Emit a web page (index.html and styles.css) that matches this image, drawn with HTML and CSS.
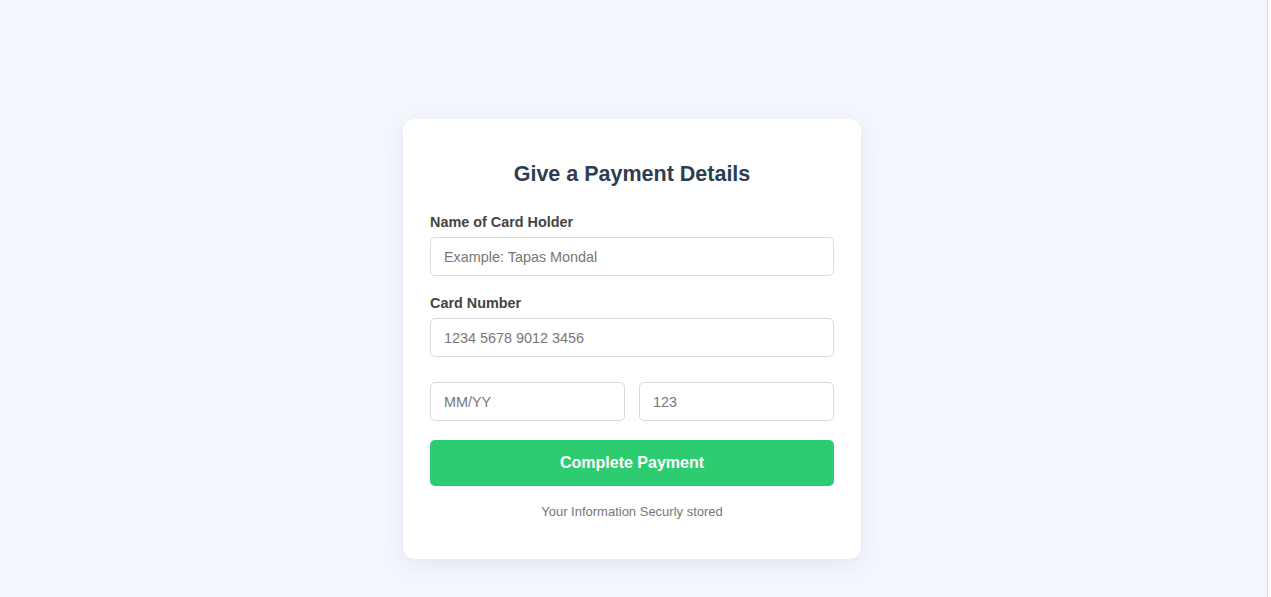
FILE: index.html
```html
<!DOCTYPE html>
<html lang="en">
<head>
<meta charset="utf-8">
<title>Payment</title>
<link rel="stylesheet" href="styles.css">
</head>
<body>
<div class="page">
  <form class="card">
    <h2 class="title">Give a Payment Details</h2>
    <div class="field">
      <label class="label">Name of Card Holder</label>
      <input class="input" type="text" placeholder="Example: Tapas Mondal">
    </div>
    <div class="field">
      <label class="label">Card Number</label>
      <input class="input" type="text" placeholder="1234 5678 9012 3456">
    </div>
    <div class="row">
      <input class="input" type="text" placeholder="MM/YY">
      <input class="input" type="text" placeholder="123">
    </div>
    <button class="btn" type="button">Complete Payment</button>
    <p class="note">Your Information Securly stored</p>
  </form>
</div>
</body>
</html>
```
FILE: styles.css
```css
html, body {
  margin: 0;
  padding: 0;
  background: #ffffff;
}
body {
  font-family: "Liberation Sans", Arial, sans-serif;
}
.page {
  width: 1268px;
  height: 597px;
  box-sizing: border-box;
  background: #f3f6fd;
  border-right: 1px solid #dfe1e6;
  padding-top: 119px;
  display: flex;
  justify-content: center;
  align-items: flex-start;
  overflow: hidden;
}
.card {
  width: 458px;
  box-sizing: border-box;
  background: #fff;
  border-radius: 12px;
  padding: 42px 27px 40px;
  box-shadow: 0 6px 20px rgba(40, 50, 90, 0.08);
  margin-left: -3px;
}
.title {
  margin: 0 0 27px;
  font-size: 21.5px;
  line-height: 26px;
  font-weight: bold;
  text-align: center;
  color: #2c3e50;
}
.field {
  margin-bottom: 19px;
}
.label {
  display: block;
  font-size: 14.4px;
  line-height: 16px;
  font-weight: bold;
  color: #444;
  margin-bottom: 7px;
}
.input {
  display: block;
  width: 100%;
  box-sizing: border-box;
  height: 39px;
  border: 1px solid #d9d9d9;
  border-radius: 5px;
  padding: 0 13px;
  font-family: "Liberation Sans", Arial, sans-serif;
  font-size: 14.4px;
  color: #333;
  background: #fff;
  outline: none;
}
.input::placeholder {
  color: #777;
}
.row {
  display: flex;
  gap: 14px;
  margin-top: 25px;
}
.row .input {
  flex: 1;
  min-width: 0;
}
.btn {
  display: block;
  width: 100%;
  height: 46px;
  margin-top: 19px;
  border: none;
  border-radius: 5px;
  background: #2ecc71;
  color: #fff;
  font-family: "Liberation Sans", Arial, sans-serif;
  font-size: 16px;
  font-weight: bold;
}
.note {
  margin: 18px 0 0;
  text-align: center;
  font-size: 13px;
  line-height: 15px;
  color: #777;
}
```
